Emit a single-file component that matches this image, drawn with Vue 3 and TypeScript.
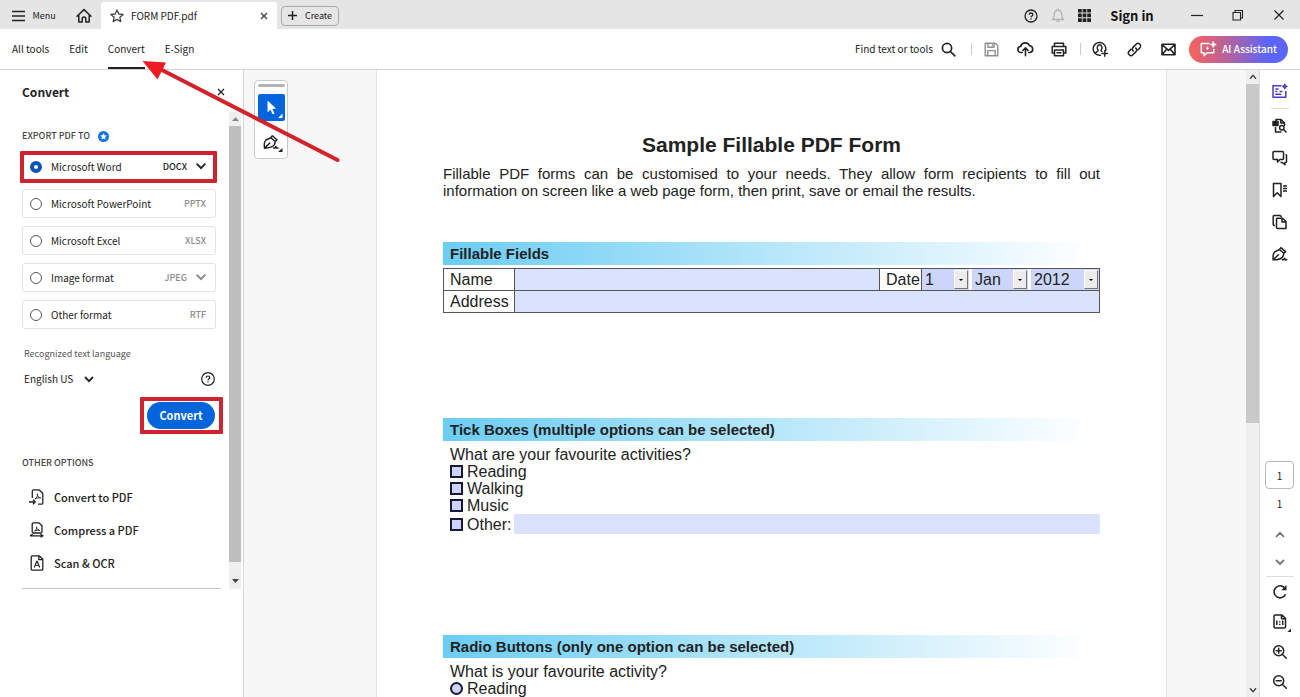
<script setup lang="ts">
import { ref } from 'vue'

interface ExportFormat {
  id: string
  label: string
  ext: string
  menu: boolean
}

const formats: ExportFormat[] = [
  { id: 'word', label: 'Microsoft Word', ext: 'DOCX', menu: true },
  { id: 'ppt', label: 'Microsoft PowerPoint', ext: 'PPTX', menu: false },
  { id: 'excel', label: 'Microsoft Excel', ext: 'XLSX', menu: false },
  { id: 'image', label: 'Image format', ext: 'JPEG', menu: true },
  { id: 'other', label: 'Other format', ext: 'RTF', menu: false },
]
const selected = ref<string>('word')
const tools: string[] = ['All tools', 'Edit', 'Convert', 'E-Sign']
const activeTool = ref<string>('Convert')
const activities: string[] = ['Reading', 'Walking', 'Music']
const dates: { id: string; value: string }[] = [
  { id: 'day', value: '1' },
  { id: 'month', value: 'Jan' },
  { id: 'year', value: '2012' },
]
</script>

<template>
  <div class="app">
    <header class="titlebar">
      <button class="menu">
        <svg width="13" height="12" viewBox="0 0 13 12"><path d="M0 1.500h13M0 6h13M0 10.500h13" stroke="#222" stroke-width="1.500" /></svg>
        Menu
      </button>
      <button class="home" aria-label="Home">
        <svg width="16" height="16" viewBox="0 0 16 16" fill="none" stroke="#222" stroke-width="1.500" stroke-linejoin="round" stroke-linecap="round"><path d="M1 8.200 8 1.600l7 6.600M2.800 7v7h3.400v-3.200a1.800 1.800 0 0 1 3.600 0V14h3.400V7" /></svg>
      </button>
      <div class="tab">
        <svg width="14" height="14" viewBox="0 0 14 14" fill="none" stroke="#444" stroke-width="1.300" stroke-linejoin="round"><path d="m7 1 1.800 4 4.300.4-3.200 2.900.9 4.300L7 10.400l-3.800 2.200.9-4.300L.9 5.400 5.200 5z" /></svg>
        <span class="name">FORM PDF.pdf</span>
        <button aria-label="Close tab">
          <svg width="8" height="8" viewBox="0 0 8 8"><path d="m1 1 6 6M7 1 1 7" stroke="#444" stroke-width="1.400" /></svg>
        </button>
      </div>
      <button class="create">
        <svg width="9" height="9" viewBox="0 0 9 9"><path d="M4.500 0v9M0 4.500h9" stroke="#222" stroke-width="1.500" /></svg>
        Create
      </button>
      <span class="grow"></span>
      <button class="cell" aria-label="Help">
        <svg width="14" height="14" viewBox="0 0 14 14" fill="none" stroke="#222" stroke-width="1.300"><circle cx="7" cy="7" r="6" /><path d="M5.200 5.700c0-2.300 3.600-2.300 3.600 0 0 1.200-1.800 1.300-1.800 2.500M7 9.300v1.200" /></svg>
      </button>
      <button class="cell" aria-label="Notifications">
        <svg width="14" height="15" viewBox="0 0 14 15" fill="none" stroke="#b0b0b0" stroke-width="1.300" stroke-linejoin="round"><path d="M1.500 11.500c2-1.500 1.500-3.500 1.800-5.500C3.700 3.500 5 2.200 7 2.200S10.300 3.500 10.700 6c.3 2-.2 4 1.800 5.500zM7 .7v1.500M5.400 13.300h3.200" /></svg>
      </button>
      <button class="cell" aria-label="Apps">
        <svg width="13" height="13" viewBox="0 0 13 13" fill="#222"><path d="M0 0h3.800v3.600H0zM4.600 0h3.800v3.600H4.600zM9.200 0H13v3.600H9.200zM0 4.600h3.800v3.700H0zM4.600 4.600h3.800v3.700H4.600zM9.200 4.600H13v3.700H9.200zM0 9.300h3.800V13H0zM4.600 9.300h3.800V13H4.600zM9.200 9.300H13V13H9.200z" /></svg>
      </button>
      <button class="signin">Sign in</button>
      <button class="win" aria-label="Minimize">
        <svg width="12" height="12" viewBox="0 0 12 12"><path d="M0 6.500h12" stroke="#222" stroke-width="1.200" /></svg>
      </button>
      <button class="win" aria-label="Restore">
        <svg width="12" height="12" viewBox="0 0 12 12" fill="none" stroke="#222" stroke-width="1.100"><path d="M1 3.500h7.500V11H1zM3 3.500v-2h7.500V9h-2" /></svg>
      </button>
      <button class="win" aria-label="Close">
        <svg width="12" height="12" viewBox="0 0 12 12"><path d="m1.500 1.500 9 9M10.500 1.500l-9 9" stroke="#222" stroke-width="1.200" /></svg>
      </button>
    </header>

    <nav class="toolbar">
      <div class="tools">
        <button v-for="t in tools" :key="t" :class="{ active: t === activeTool }" @click="activeTool = t">{{ t }}</button>
      </div>
      <span class="grow"></span>
      <button class="find">
        Find text or tools
        <svg width="15" height="15" viewBox="0 0 15 15" fill="none" stroke="#222" stroke-width="1.700"><circle cx="6" cy="6" r="4.600" /><path d="m9.500 9.500 4.300 4.300" stroke-linecap="round" /></svg>
      </button>
      <i class="sep"></i>
      <button class="tool" aria-label="Save">
        <svg width="15" height="15" viewBox="0 0 15 15" fill="none" stroke="#8f8f8f" stroke-width="1.400" stroke-linejoin="round"><path d="M1.200 1.200h10l2.600 2.600v10H1.200zM4 1.200v4h6v-4M3.800 13.800V8.600h7.400v5.200M8.400 2.500v1.500" /></svg>
      </button>
      <button class="tool" aria-label="Upload">
        <svg width="17" height="16" viewBox="0 0 17 16" fill="none" stroke="#222" stroke-width="1.600" stroke-linecap="round" stroke-linejoin="round"><path d="M5.200 11.500H4a3 3 0 0 1-.3-6A4.600 4.600 0 0 1 12.500 4.800a3.400 3.400 0 0 1 .6 6.700h-1.300M8.500 14.800V7.200M5.900 9.500l2.600-2.600 2.600 2.600" /></svg>
      </button>
      <button class="tool" aria-label="Print">
        <svg width="16" height="15" viewBox="0 0 16 15" fill="none" stroke="#222" stroke-width="1.500" stroke-linejoin="round"><path d="M3.500 4V1.300h9V4M3.500 11H1.200V4.500h13.600V11h-2.300M3.500 8h9v5.700h-9zM5.500 10.800h5" /></svg>
      </button>
      <i class="sep near"></i>
      <button class="tool" aria-label="Share">
        <svg width="17" height="16" viewBox="0 0 17 16" fill="none" stroke="#222" stroke-width="1.400" stroke-linecap="round"><path d="M8.500 14.200a6.400 6.400 0 1 1 5.200-4.700M3.800 11.800c.3-1.300 2.700-1.200 2.400-2.600C4.500 7.500 5 3.700 7.600 3.700s3.100 3.800 1.400 5.500c-.1.700.3 1 .8 1.200M12.800 9.800v5.400M10.100 12.500h5.400" /></svg>
      </button>
      <button class="tool" aria-label="Link">
        <svg width="15" height="15" viewBox="0 0 15 15" fill="none" stroke="#222" stroke-width="1.500" stroke-linecap="round"><path d="M6.200 8.900a2.700 2.700 0 0 1 0-3.800l2.900-2.900a2.600 2.600 0 0 1 3.700 3.700l-1.600 1.700M8.800 6.100a2.700 2.700 0 0 1 0 3.800l-2.900 2.900a2.600 2.600 0 0 1-3.700-3.700l1.600-1.700" /></svg>
      </button>
      <button class="tool" aria-label="Email">
        <svg width="15" height="13" viewBox="0 0 15 13" fill="none" stroke="#222" stroke-width="1.600" stroke-linejoin="round"><path d="M1 1.200h13v10.600H1zM1 1.500l6.500 5.800L14 1.500M1.200 11.500l4.300-5M13.800 11.500l-4.300-5" /></svg>
      </button>
      <button class="ai">
        <svg width="17" height="16" viewBox="0 0 17 16" fill="none" stroke="#fff" stroke-width="1.500" stroke-linejoin="round" stroke-linecap="round"><path d="M9 2.500H1.300v9.300H4v2.900l3.200-2.900h6.500V8.500" /><path d="m13.300.8.9 1.900 2 .9-2 .9-.9 2-.9-2-2-.9 2-.9zM7.500 6l.4 1 .9.300-.9.400-.4.900-.4-.9-.9-.4.9-.3z" fill="#fff" stroke-width=".8" /></svg>
        AI Assistant
      </button>
    </nav>

    <div class="body">
      <aside class="panel">
        <div class="panel-head">
          <h2>Convert</h2>
          <button aria-label="Close panel">
            <svg width="8" height="8" viewBox="0 0 8 8"><path d="m1 1 6 6M7 1 1 7" stroke="#222" stroke-width="1.300" /></svg>
          </button>
        </div>
        <div class="panel-scroll">
          <div class="panel-content">
            <h3 class="caps">
              EXPORT PDF TO
              <svg width="11" height="11" viewBox="0 0 11 11"><circle cx="5.500" cy="5.500" r="5.500" fill="#1473e6" /><path d="m5.500 2.200 1 2.100 2.300.3-1.700 1.600.4 2.300-2-1.100-2 1.100.4-2.300-1.700-1.600 2.300-.3z" fill="#fff" /></svg>
            </h3>
            <div class="formats">
              <label v-for="f in formats" :key="f.id" class="format" :class="{ chosen: f.id === selected }">
                <input v-model="selected" type="radio" name="format" :value="f.id" />
                <span class="grow">{{ f.label }}</span>
                <b>{{ f.ext }}</b>
                <svg v-if="f.menu" width="10" height="7" viewBox="0 0 10 7"><path d="m1.200 1.200 3.800 4 3.800-4" fill="none" stroke="currentColor" stroke-width="1.900" stroke-linecap="round" /></svg>
              </label>
            </div>
            <label class="lang-label" for="lang">Recognized text language</label>
            <div class="lang">
              <div class="lang-pick">
                <select id="lang"><option>English US</option></select>
                <svg width="10" height="7" viewBox="0 0 10 7"><path d="m1.500 1.500 3.500 3.600 3.500-3.600" fill="none" stroke="#222" stroke-width="1.800" stroke-linecap="round" /></svg>
              </div>
              <button aria-label="Language help">
                <svg width="14" height="14" viewBox="0 0 14 14" fill="none" stroke="#222" stroke-width="1.200"><circle cx="7" cy="7" r="6.300" /><path d="M5.200 5.700c0-2.300 3.600-2.300 3.600 0 0 1.200-1.800 1.300-1.800 2.500M7 9.300v1.300" /></svg>
              </button>
            </div>
            <div class="submit"><button>Convert</button></div>
            <h3 class="caps second">OTHER OPTIONS</h3>
            <div class="options">
              <button>
                <svg width="16" height="16" viewBox="0 0 16 16" fill="none" stroke="#222" stroke-width="1.300" stroke-linejoin="round"><path d="M3.300 9V2A1.200 1.200 0 0 1 4.500.8H10L13.800 4.500V14a1.200 1.200 0 0 1-1.200 1.200H9M0 13h6M4 10.800 6.200 13 4 15.200" /><path d="M5.800 10C8 8.500 9 6.500 8.500 4.800c-.8.200.2 4 3.300 4.200-1.800-.5-4 0-6 1z" stroke-width=".9" /></svg>
                Convert to PDF
              </button>
              <button>
                <svg width="16" height="16" viewBox="0 0 16 16" fill="none" stroke="#222" stroke-width="1.300" stroke-linejoin="round"><path d="M4.200.8h5.600l3.200 3v6a1.200 1.200 0 0 1-1.200 1.200H4.400a1.200 1.200 0 0 1-1.200-1.200v-8a1 1 0 0 1 1-1zM1 13.800h13M3.500 12.300 1 13.800M11.500 12.300l2.500 1.500-2.500 1.500" /><path d="M5.500 9c1.500-1 2.600-2.500 2.200-4.200-.6.600.4 3.200 3 3.500-1.700-.2-3.500 0-5.200.7z" stroke-width=".9" /></svg>
                Compress a PDF
              </button>
              <button>
                <svg width="16" height="16" viewBox="0 0 16 16" fill="none" stroke="#222" stroke-width="1.300" stroke-linejoin="round"><path d="M2.200 2A1.200 1.200 0 0 1 3.400.8h6.800l3.600 3.500V14a1.200 1.200 0 0 1-1.200 1.200H3.400A1.200 1.200 0 0 1 2.200 14zM9.800 1v3.700h3.800" /><path d="m5.300 12.500 2.400-6.300h.6l2.400 6.300M6.200 10.300h3.600" stroke-width="1.100" /></svg>
                Scan &amp; OCR
              </button>
            </div>
          </div>
          <div class="bar small">
            <span class="step"><svg width="7" height="4" viewBox="0 0 7 4"><path d="M0 4 3.500 0 7 4z" fill="#8a8a8a" /></svg></span>
            <span class="thumb"></span>
            <span class="step end"><svg width="7" height="4" viewBox="0 0 7 4"><path d="M0 0h7L3.500 4z" fill="#444" /></svg></span>
          </div>
        </div>
      </aside>

      <main class="canvas">
        <div class="quick">
          <i></i>
          <button class="on" aria-label="Select">
            <svg width="27" height="27" viewBox="0 0 27 27" fill="#fff"><path d="m9.500 6.500 8.500 8-3.600.5 2.100 4.400-1.900.9-2.100-4.500-2.900 2.400zM24.500 19.500v4.500H20z" /></svg>
          </button>
          <button aria-label="Sign">
            <svg width="27" height="27" viewBox="0 0 27 27" fill="none" stroke="#222" stroke-width="1.500" stroke-linecap="round" stroke-linejoin="round"><path d="M6.500 20.200C6 16.500 6.800 13 8 12l4.800-2.300 4.500 3.800-1 3.300c-.8 1.700-5.300 3.400-9.800 3.400zM6.800 19.900l5-4.900M12.800 9.700l1.500-1.900 4.700 4-1.700 1.700M15.500 20h1.200l1.300-1.500.3 1.500h1.700" /><path d="M24.500 20v4H20z" fill="#222" stroke="none" /></svg>
          </button>
        </div>
        <div class="desk">
          <article class="page">
            <h1>Sample Fillable PDF Form</h1>
            <p class="intro">Fillable PDF forms can be customised to your needs. They allow form recipients to fill out information on screen like a web page form, then print, save or email the results.</p>
            <h2 class="band first">Fillable Fields</h2>
            <table>
              <colgroup><col class="c-label" /><col /><col class="c-date" /><col class="c-selects" /></colgroup>
              <tbody>
                <tr>
                  <th><label for="name">Name</label></th>
                  <td><input id="name" type="text" /></td>
                  <th class="date"><label for="day">Date</label></th>
                  <td class="plain">
                    <div class="dates">
                      <div v-for="d in dates" :key="d.id" class="pick" :class="d.id">
                        <select :id="d.id" :aria-label="d.id"><option>{{ d.value }}</option></select>
                        <span class="drop"><svg width="4" height="2" viewBox="0 0 4 2"><path d="M0 0h4L2 2z" /></svg></span>
                      </div>
                    </div>
                  </td>
                </tr>
                <tr>
                  <th><label for="address">Address</label></th>
                  <td colspan="3"><input id="address" type="text" /></td>
                </tr>
              </tbody>
            </table>
            <h2 class="band second">Tick Boxes (multiple options can be selected)</h2>
            <div class="answers">
              <p>What are your favourite activities?</p>
              <label v-for="a in activities" :key="a"><input type="checkbox" />{{ a }}</label>
              <div class="other">
                <label><input type="checkbox" />Other:</label>
                <input type="text" aria-label="Other activity" />
              </div>
            </div>
            <h2 class="band third">Radio Buttons (only one option can be selected)</h2>
            <div class="answers">
              <p>What is your favourite activity?</p>
              <label><input type="radio" name="activity" />Reading</label>
            </div>
          </article>
        </div>
        <div class="bar">
          <span class="step"><svg width="8" height="6" viewBox="0 0 8 6"><path d="m1 4.800 3-3.400 3 3.400" fill="none" stroke="#444" stroke-width="1.400" /></svg></span>
          <span class="thumb"></span>
          <span class="rest"></span>
          <span class="step"><svg width="8" height="6" viewBox="0 0 8 6"><path d="m1 1.200 3 3.400 3-3.400" fill="none" stroke="#444" stroke-width="1.400" /></svg></span>
        </div>
      </main>

      <aside class="rail">
        <button aria-label="Generative summary">
          <svg width="16" height="16" viewBox="0 0 16 16" fill="none" stroke="#4b3cc4" stroke-width="1.500" stroke-linejoin="round"><path d="M9.500 2.800H1v11.400h12.800V8M3.300 6h3.200M3.300 8.500h2M3.300 11.200h6M7.500 8.500h3" /><path d="m12.800.8.8 1.800 1.800.9-1.800.8-.8 1.900-.8-1.900-1.900-.8 1.900-.9z" fill="#4b3cc4" stroke-width="1" /></svg>
        </button>
        <i class="line"></i>
        <button aria-label="Search document">
          <svg width="16" height="16" viewBox="0 0 16 16" fill="none" stroke="#222" stroke-width="1.500" stroke-linejoin="round"><path d="M4 3V1.500h5l3.500 3.300V8M3.500 9v5h6M8.800 1.500V5h3.500" /><circle cx="9.800" cy="9.800" r="2.200" /><path d="m11.500 11.500 3 3" /><path d="M1 3.500h5v4H1z" fill="#222" /></svg>
        </button>
        <button aria-label="Comments">
          <svg width="16" height="16" viewBox="0 0 16 16" fill="none" stroke="#222" stroke-width="1.500" stroke-linejoin="round"><path d="M2 1.500h8.500a1 1 0 0 1 1 1v6a1 1 0 0 1-1 1H8L5.500 12V9.500H2a1 1 0 0 1-1-1v-6a1 1 0 0 1 1-1zM13.500 4.500a1 1 0 0 1 1 1v6a1 1 0 0 1-1 1H13v2.300l-2.700-2.300H8.500" /></svg>
        </button>
        <button aria-label="Bookmarks">
          <svg width="16" height="16" viewBox="0 0 16 16" fill="none" stroke="#222" stroke-width="1.500" stroke-linejoin="round"><path d="M1.500 1.500H9v13l-3.800-3.700-3.700 3.700zM11 4h4M11 6.500h4M11 9h4" /></svg>
        </button>
        <button aria-label="Pages">
          <svg width="16" height="16" viewBox="0 0 16 16" fill="none" stroke="#222" stroke-width="1.500" stroke-linejoin="round"><path d="M3 11.500H2.200a1 1 0 0 1-1-1v-8a1 1 0 0 1 1-1h6L9.700 3M5.500 4.200h5l3.500 3.300v7H5.500a1 1 0 0 1-1-1V5.200a1 1 0 0 1 1-1zM10 4.500V8h3.800" /></svg>
        </button>
        <button aria-label="Signatures">
          <svg width="16" height="16" viewBox="0 0 16 16" fill="none" stroke="#222" stroke-width="1.500" stroke-linecap="round" stroke-linejoin="round"><path d="M1.200 13.800C.8 10.200 1.500 6.800 2.700 5.800l4.700-2.300 4.500 3.800-1 3.300c-.8 1.700-5.200 3.200-9.700 3.200zM1.500 13.500l4.900-4.800M7.400 3.500l1.500-1.900 4.700 4-1.700 1.700M10.300 13.800h1.200l1.300-1.500.3 1.500h1.700" /></svg>
        </button>
        <span class="grow"></span>
        <input class="pageno" type="text" value="1" aria-label="Page number" />
        <span class="total">1</span>
        <button class="mini" aria-label="Previous page">
          <svg width="10" height="7" viewBox="0 0 10 7"><path d="m1.500 5.300 3.500-3.500 3.500 3.500" fill="none" stroke="#777" stroke-width="1.800" stroke-linecap="round" /></svg>
        </button>
        <button class="mini" aria-label="Next page">
          <svg width="10" height="7" viewBox="0 0 10 7"><path d="M1.500 1.500 5 5l3.500-3.500" fill="none" stroke="#777" stroke-width="1.800" stroke-linecap="round" /></svg>
        </button>
        <i class="line flush"></i>
        <button class="view" aria-label="Rotate">
          <svg width="16" height="16" viewBox="0 0 16 16" fill="none" stroke="#222" stroke-width="1.600"><path d="M13.500 10.300A6 6 0 1 1 12.500 3.800" /><path d="M14.500 1v5.200H9.300z" fill="#222" stroke="none" /></svg>
        </button>
        <button class="view" aria-label="Page view">
          <svg width="24" height="20" viewBox="0 0 24 20" fill="none" stroke="#222" stroke-width="1.500" stroke-linejoin="round"><path d="M7 3h7l3.500 3.500V15a1 1 0 0 1-1 1H7a1 1 0 0 1-1-1V4a1 1 0 0 1 1-1zM13.500 3.300v3.500h3.700M8.800 8.500V13M14.700 8.500V13M11.700 9.300v1.200M11.700 11.700V13" /><path d="M23 16.500V20h-3.500z" fill="#222" stroke="none" /></svg>
        </button>
        <button class="view" aria-label="Zoom in">
          <svg width="16" height="16" viewBox="0 0 16 16" fill="none" stroke="#222" stroke-width="1.500"><circle cx="6.700" cy="6.700" r="5" /><path d="m10.300 10.300 4 4M4.200 6.700h5M6.700 4.200v5" stroke-linecap="round" /></svg>
        </button>
        <button class="view" aria-label="Zoom out">
          <svg width="16" height="16" viewBox="0 0 16 16" fill="none" stroke="#222" stroke-width="1.500"><circle cx="6.700" cy="6.700" r="5" /><path d="m10.300 10.300 4 4M4.200 6.700h5" stroke-linecap="round" /></svg>
        </button>
      </aside>
    </div>

    <svg class="arrow" width="200" height="106" viewBox="0 0 200 106"><path d="M18 8.500 196.500 100" stroke="#d2232a" stroke-width="4" stroke-linecap="round" /><path d="M1.500 1 25 2.500 16.500 19.500z" fill="#ed1c24" /></svg>
  </div>
</template>

<style>
html,
body {
  margin: 0;
}
</style>

<style scoped>
.app {
  position: relative;
  display: flex;
  flex-direction: column;
  height: 100vh;
  overflow: hidden;
  background: #fff;
  color: #222;
  font: 10px/16px "Noto Sans CJK SC", "Noto Sans", sans-serif;
}
.app * {
  box-sizing: border-box;
}
svg {
  display: block;
  flex: none;
}
button {
  display: flex;
  align-items: center;
  justify-content: center;
  flex: none;
  padding: 0;
  border: 0;
  background: none;
  color: inherit;
  font: inherit;
  white-space: nowrap;
}
h1,
h2,
h3,
p {
  margin: 0;
}
select,
input {
  margin: 0;
  padding: 0;
  border: 0;
  border-radius: 0;
  background: none;
  color: inherit;
  font: inherit;
  appearance: none;
}
.grow {
  flex: 1;
}

/* Title bar */
.titlebar {
  display: flex;
  align-items: center;
  flex: none;
  height: 29px;
  padding: 2px 1px 0 12px;
  background: #e5e5e5;
}
.menu {
  gap: 7px;
  width: 44px;
  font-size: 9px;
}
.home {
  width: 45px;
  padding-left: 10px;
}
.tab {
  display: flex;
  align-items: center;
  align-self: stretch;
  gap: 7px;
  width: 176px;
  padding: 0 9px 0 9px;
  border-radius: 3px 3px 0 0;
  background: #fff;
}
.tab .name {
  flex: 1;
}
.create {
  gap: 8px;
  width: 58px;
  height: 20px;
  margin: 0 0 0 4px;
  border: 1px solid #aaa;
  border-radius: 4px;
  font-size: 9px;
}
.cell {
  width: 27px;
}
.signin {
  width: 68px;
  margin-right: 10px;
  font-size: 13px;
  font-weight: 700;
  color: #111;
}
.win {
  width: 41px;
  height: 24px;
  padding-bottom: 2px;
}

/* Toolbar */
.toolbar {
  display: flex;
  align-items: center;
  flex: none;
  height: 41px;
  padding: 0 12px;
  border-bottom: 1px solid #d5d5d5;
}
.tools {
  display: flex;
  align-self: stretch;
  gap: 20px;
}
.tools button {
  border-top: 2px solid transparent;
  border-bottom: 2px solid transparent;
}
.tools .active {
  border-bottom-color: #222;
}
.find {
  gap: 8px;
}
.sep {
  width: 1px;
  height: 12px;
  margin: 0 2px 0 15px;
  background: #ccc;
}
.sep.near {
  margin-left: 4px;
}
.tool {
  width: 34px;
}
.ai {
  gap: 5px;
  width: 99px;
  height: 27px;
  margin-left: 4px;
  border-radius: 14px;
  background: linear-gradient(90deg, #f9625a, #b3639e 40%, #5c65fb 80%);
  color: #fff;
  font-weight: 500;
}

/* Convert panel */
.body {
  display: flex;
  flex: 1;
  min-height: 0;
}
.panel {
  flex: none;
  width: 244px;
  padding-right: 2px;
  border-right: 1px solid #d8d8d8;
}
.panel-head {
  display: flex;
  align-items: center;
  justify-content: space-between;
  height: 42px;
  padding: 2px 16px 0 22px;
}
.panel-head h2 {
  font-size: 12px;
  font-weight: 700;
}
.panel-scroll {
  display: flex;
}
.panel-content {
  flex: 1;
  padding: 16px 8px 0 22px;
}
.caps {
  display: flex;
  align-items: center;
  gap: 8px;
  font-size: 9px;
  font-weight: 500;
  color: #444;
}
.formats {
  display: flex;
  flex-direction: column;
  gap: 8px;
  margin: 8px 5px 0 0;
}
.format {
  position: relative;
  display: flex;
  align-items: center;
  gap: 9px;
  height: 29px;
  padding: 0 9px 0 7px;
  border: 1px solid #e3e3e3;
  border-radius: 3px;
  color: #8a8a8a;
}
.format .grow {
  color: #222;
}
.format b {
  font-size: 9px;
  font-weight: 500;
}
.format input {
  width: 12px;
  height: 12px;
  border: 1px solid #555;
  border-radius: 50%;
}
.format input:checked {
  border: 4px solid #0d55b5;
}
.format.chosen {
  color: #222;
}
.format.chosen::after,
.submit::after {
  content: "";
  position: absolute;
  inset: -2px -2px -3px -3px;
  border: 4px solid #cf2430;
  border-radius: 1px;
}
.lang-label {
  display: block;
  margin: 17px 0 0 2px;
  font-size: 9px;
  color: #555;
}
.lang {
  display: flex;
  align-items: center;
  justify-content: space-between;
  height: 18px;
  margin: 8px 6px 0 2px;
}
.lang-pick {
  display: flex;
  align-items: center;
  gap: 10px;
}
.submit {
  position: relative;
  width: 68px;
  margin: 14px 6px 0 auto;
}
.submit::after {
  inset: -5px -8px -5px -7px;
}
.submit button {
  width: 68px;
  height: 27px;
  padding-bottom: 1px;
  border-radius: 14px;
  background: #0265dc;
  color: #fff;
  font-size: 11px;
  font-weight: 700;
}
.caps.second {
  margin-top: 26px;
}
.options {
  margin-top: 9px;
  padding-bottom: 9px;
  border-bottom: 1px solid #c8c8c8;
}
.options button {
  gap: 9px;
  height: 33px;
  padding-left: 7px;
  font-size: 11px;
  font-weight: 500;
}
.bar {
  display: flex;
  flex-direction: column;
  flex: none;
  width: 13px;
  background: #efefef;
}
.bar .step {
  display: flex;
  align-items: center;
  justify-content: center;
  height: 14px;
}
.bar .thumb {
  flex: 339;
  background: #c9c9c9;
}
.bar .rest {
  flex: 260;
}
.small {
  width: 12px;
}
.small .thumb {
  flex: 1;
  background: #bebebe;
}
.small .end {
  height: 27px;
  padding-top: 10px;
}

/* Document area */
.canvas {
  display: flex;
  flex: 1;
  min-width: 0;
  background: #f7f7f7;
}
.quick {
  display: flex;
  flex-direction: column;
  align-items: center;
  align-self: flex-start;
  flex: none;
  gap: 7px;
  width: 34px;
  height: 79px;
  margin: 10px 9px 0 10px;
  padding-top: 3px;
  border: 1px solid #c9c9c9;
  border-radius: 4px;
  background: #fff;
}
.quick i {
  width: 27px;
  height: 3px;
  border-radius: 2px;
  background: #b3b3b3;
}
.quick button {
  border-radius: 2px;
}
.quick .on {
  background: #0265dc;
}
.desk {
  flex: 1;
  min-width: 0;
  padding: 0 79px;
}
.page {
  height: 100%;
  padding: 63px 66px 0;
  overflow: hidden;
  border: solid #e2e2e2;
  border-width: 0 1px;
  background: #fff;
  font: 16px/17px "Liberation Sans", Arial, sans-serif;
}
h1 {
  font-size: 21px;
  line-height: 24px;
  text-align: center;
}
.intro {
  margin-top: 8px;
  font-size: 15px;
  text-align: justify;
}
.band {
  height: 23px;
  padding-left: 7px;
  background: linear-gradient(90deg, #6bcdf4, #fff 99%);
  font-size: 15px;
  line-height: 23px;
}
.band.first {
  margin-top: 43px;
}
.band.second {
  margin-top: 105px;
}
.band.third {
  margin-top: 101px;
}
table {
  width: 100%;
  margin-top: 3px;
  table-layout: fixed;
  border-collapse: collapse;
}
.c-label {
  width: 71px;
}
.c-date {
  width: 42px;
}
.c-selects {
  width: 178px;
}
th,
td {
  height: 22px;
  padding: 0;
  border: 1px solid #555;
}
th {
  padding-left: 6px;
  font-weight: 400;
  text-align: left;
}
td {
  background: #dbe2fe;
}
td.plain {
  background: #fff;
}
td input {
  display: block;
  width: 100%;
  height: 21px;
}
.dates {
  display: flex;
  gap: 3px;
}
.pick {
  display: flex;
  align-items: center;
  height: 21px;
  background: #ccd6fd;
}
.pick select {
  flex: 1;
  min-width: 0;
  padding-left: 3px;
}
.day {
  width: 47px;
}
.month {
  width: 56px;
}
.year {
  flex: 1;
}
.drop {
  display: flex;
  align-items: center;
  justify-content: center;
  width: 14px;
  height: 19px;
  margin-right: 1px;
  border: 1px solid #fff;
  border-right-color: #777;
  border-bottom-color: #777;
  background: #ececec;
  pointer-events: none;
}
.answers {
  margin-top: 5px;
  padding-left: 7px;
}
.answers label {
  display: flex;
  align-items: center;
  gap: 4px;
}
.answers label input {
  width: 13px;
  height: 13px;
  border: 2px solid #17173a;
  background: #ccd4fc;
}
.answers [type="radio"] {
  border-radius: 50%;
}
.other {
  display: flex;
  align-items: stretch;
  gap: 3px;
  height: 20px;
}
.other > input {
  flex: 1;
  min-width: 0;
  background: #dbe2fe;
}

/* Right rail */
.rail {
  display: flex;
  flex-direction: column;
  align-items: center;
  flex: none;
  width: 41px;
  padding: 5px 1px 0 0;
  border-left: 1px solid #ddd;
}
.rail button {
  width: 32px;
  height: 32px;
}
.rail .mini {
  height: 28px;
}
.rail .view {
  height: 30px;
}
.line {
  width: 18px;
  height: 1px;
  margin: 1px 0;
  background: #ddd;
}
.line.flush {
  width: 28px;
  margin: 0;
}
.pageno {
  width: 29px;
  height: 28px;
  border: 1px solid #b8b8b8;
  border-radius: 4px;
  text-align: center;
}
.total {
  height: 31px;
  line-height: 30px;
}

.arrow {
  position: absolute;
  top: 60px;
  left: 141px;
  pointer-events: none;
}
</style>
